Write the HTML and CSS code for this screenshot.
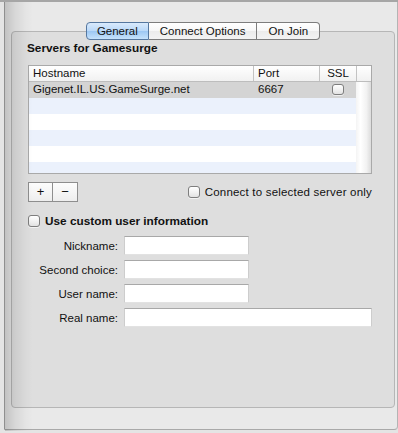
FILE: index.html
```html
<!DOCTYPE html>
<html lang="en">
<head>
    <meta charset="UTF-8">
    <title>Server Settings</title>
    <link rel="stylesheet" href="styles.css">
</head>
<body>
    <div class="window">
        <div class="frame">
            <div class="tabs">
                <div class="tab selected">General</div>
                <div class="tab">Connect Options</div>
                <div class="tab">On Join</div>
            </div>

            <div class="panel">
                <div class="title">Servers for Gamesurge</div>

                <div class="table">
                    <div class="table-head">
                        <div class="cell col-host">Hostname</div>
                        <div class="cell col-port">Port</div>
                        <div class="cell col-ssl center">SSL</div>
                        <div class="cell col-fill"></div>
                    </div>
                    <div class="table-body">
                        <div class="rows">
                            <div class="row selected">
                                <div class="cell col-host">Gigenet.IL.US.GameSurge.net</div>
                                <div class="cell col-port">6667</div>
                                <div class="cell col-ssl center"><span class="checkbox small"></span></div>
                            </div>
                            <div class="row alt"></div>
                            <div class="row"></div>
                            <div class="row alt"></div>
                            <div class="row"></div>
                            <div class="row alt"></div>
                        </div>
                        <div class="scroller"></div>
                    </div>
                </div>

                <div class="under-table">
                    <div class="btn-group">
                        <div class="btn">+</div>
                        <div class="btn">&minus;</div>
                    </div>
                    <label class="check">
                        <span class="checkbox"></span>
                        <span class="wide-text">Connect to selected server only</span>
                    </label>
                </div>

                <label class="check custom">
                    <span class="checkbox"></span>
                    <strong>Use custom user information</strong>
                </label>

                <div class="form">
                    <div class="field">
                        <span class="label">Nickname:</span>
                        <span class="input"></span>
                    </div>
                    <div class="field">
                        <span class="label">Second choice:</span>
                        <span class="input"></span>
                    </div>
                    <div class="field">
                        <span class="label">User name:</span>
                        <span class="input"></span>
                    </div>
                    <div class="field">
                        <span class="label">Real name:</span>
                        <span class="input wide"></span>
                    </div>
                </div>
            </div>
        </div>
        <div class="side-shadow"></div>
    </div>
</body>
</html>
```

FILE: styles.css
```css
* {
    box-sizing: border-box;
}

body {
    margin: 0;
    background: #d4d4d4;
    font-family: "Liberation Sans", Arial, sans-serif;
    font-size: 11.5px;
    color: #111;
}

.window {
    position: relative;
    width: 398px;
    height: 433px;
    overflow: hidden;
    background: #e4e4e4;
    border-top: 2px solid #a6a6a6;
}

.frame {
    margin-left: 4px;
    width: 394px;
    height: 428px;
    padding: 20px 2px 0 6px;
    background: #e9e9e9;
    border-left: 1px solid #8f8f8f;
    border-right: 1px solid #b4b4b4;
    border-bottom: 1px solid #a9a9a9;
    border-bottom-right-radius: 4px;
}

.side-shadow {
    position: absolute;
    left: 5px;
    top: 0;
    width: 28px;
    height: 429px;
    background: linear-gradient(to right, rgba(0,0,0,0.17), rgba(0,0,0,0.08) 35%, rgba(0,0,0,0.02) 75%, rgba(0,0,0,0));
    pointer-events: none;
}

/* tabs */

.tabs {
    position: relative;
    z-index: 1;
    display: flex;
    justify-content: center;
    margin-bottom: -9px;
}

.tab {
    height: 18px;
    line-height: 16px;
    padding: 0 11px;
    border: 1px solid #7d7d7d;
    border-left: none;
    background: linear-gradient(#ffffff, #f7f7f7 50%, #ececec 51%, #f3f3f3);
    text-align: center;
}

.tab:first-child {
    border-left: 1px solid #6d7f95;
    border-radius: 4px 0 0 4px;
}

.tab:last-child {
    border-radius: 0 4px 4px 0;
}

.tab.selected {
    padding: 0 10px;
    border-color: #55779f;
    background: linear-gradient(#d9eafc, #b9d8f8 50%, #9cc7f3 51%, #c6e2fc);
}

/* panel */

.panel {
    height: 377px;
    padding: 9px 0 0 15px;
    background: #dedede;
    border: 1px solid #b6b6b6;
    border-radius: 4px;
}

.title {
    font-weight: bold;
    font-size: 11.8px;
    line-height: 14px;
    margin-bottom: 10px;
}

/* table */

.table {
    width: 344px;
    margin-left: 1px;
    border: 1px solid #a9a9a9;
    background: #fff;
}

.table-head {
    display: flex;
    height: 16px;
    border-bottom: 1px solid #bdbdbd;
    background: linear-gradient(#ffffff, #f1f1f1);
}

.cell {
    line-height: 15px;
    padding-left: 4px;
    white-space: nowrap;
    overflow: hidden;
}

.table-head .cell {
    border-right: 1px solid #c3c3c3;
}

.table-head .col-fill {
    border-right: none;
}

.cell.center {
    text-align: center;
    padding-left: 0;
}

.col-host { width: 225px; }
.col-port { width: 66px; }
.col-ssl { width: 37px; }
.col-fill { flex: 1; }

.table-body {
    display: flex;
    height: 91px;
}

.rows {
    width: 327px;
    overflow: hidden;
}

.row {
    display: flex;
    height: 16px;
}

.row .col-ssl {
    width: 36px;
}

.row.alt {
    background: #ebf1fc;
}

.row.selected {
    background: #d4d4d4;
}

.scroller {
    flex: 1;
    background: linear-gradient(to right, #f4f4f4, #ffffff 30%, #f2f2f2 70%, #dcdcdc);
}

/* checkboxes */

.checkbox {
    display: inline-block;
    flex: none;
    width: 12px;
    height: 12px;
    border: 1px solid #7e7e7e;
    border-radius: 3px;
    background: linear-gradient(#ffffff, #f2f2f2 50%, #e2e2e2);
    box-shadow: 0 1px 0 rgba(255,255,255,0.6);
}

.checkbox.small {
    width: 12px;
    height: 11px;
    margin-top: 2px;
    vertical-align: top;
}

.check {
    display: flex;
    align-items: center;
    gap: 5px;
    line-height: 14px;
}

.wide-text {
    letter-spacing: 0.2px;
}

/* below table */

.under-table {
    display: flex;
    justify-content: space-between;
    align-items: center;
    width: 344px;
    margin-top: 8px;
    margin-left: 1px;
}

.btn-group {
    display: flex;
    height: 20px;
    border: 1px solid #8e8e8e;
    background: linear-gradient(#fdfdfd, #eeeeee);
}

.btn {
    width: 24px;
    line-height: 17px;
    text-align: center;
    font-size: 13px;
}

.btn:first-child {
    border-right: 1px solid #8e8e8e;
}

.custom {
    margin-top: 12px;
    margin-left: 1px;
}

.custom strong {
    font-size: 11.8px;
}

/* form */

.form {
    display: flex;
    flex-direction: column;
    gap: 5px;
    margin-top: 8px;
}

.field {
    display: flex;
    align-items: center;
    gap: 6px;
}

.label {
    width: 91px;
    text-align: right;
}

.input {
    width: 125px;
    height: 19px;
    background: #fff;
    border: 1px solid #cdcdcd;
    border-top-color: #a8a8a8;
    border-bottom-color: #e2e2e2;
}

.input.wide {
    width: 248px;
}
```
